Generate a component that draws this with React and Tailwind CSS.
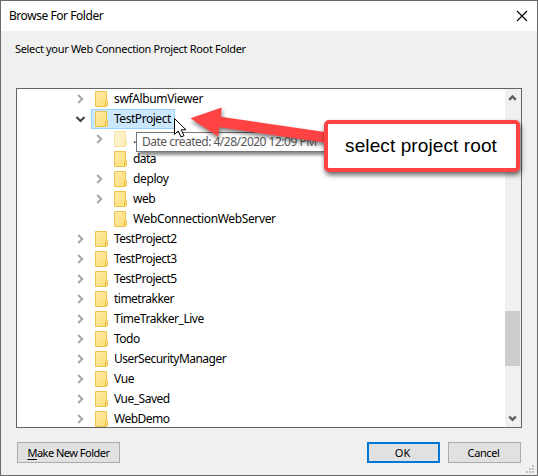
const ROWS = [
  { name: 'swfAlbumViewer', tracking: 'tracking-[-0.36px]' },
  { name: 'TestProject', open: true, selected: true, tracking: 'tracking-[-0.46px]' },
  { name: '.', nested: true, faded: true, tracking: 'tracking-[0px]' },
  { name: 'data', nested: true, leaf: true, tracking: 'tracking-[-0.55px]' },
  { name: 'deploy', nested: true, tracking: 'tracking-[-0.38px]' },
  { name: 'web', nested: true, tracking: 'tracking-[-0.45px]' },
  { name: 'WebConnectionWebServer', nested: true, leaf: true, tracking: 'tracking-[-0.36px]' },
  { name: 'TestProject2', tracking: 'tracking-[-0.5px]' },
  { name: 'TestProject3', tracking: 'tracking-[-0.5px]' },
  { name: 'TestProject5', tracking: 'tracking-[-0.5px]' },
  { name: 'timetrakker', tracking: 'tracking-[-0.52px]' },
  { name: 'TimeTrakker_Live', tracking: 'tracking-[-0.48px]' },
  { name: 'Todo', tracking: 'tracking-[-0.5px]' },
  { name: 'UserSecurityManager', tracking: 'tracking-[-0.53px]' },
  { name: 'Vue', tracking: 'tracking-[-0.4px]' },
  { name: 'Vue_Saved', tracking: 'tracking-[-0.5px]' },
  { name: 'WebDemo', tracking: 'tracking-[-0.5px]' },
];

function Chevron({ open }) {
  return (
    <svg className="h-5 w-3 shrink-0" viewBox="0 0 12 20" fill="none">
      {open ? (
        <path d="M1.5 8L5.5 12L9.5 8" stroke="#404040" strokeWidth="2" />
      ) : (
        <path d="M3.2 6L7.2 10L3.2 14" stroke="#a6a6a6" strokeWidth="2" />
      )}
    </svg>
  );
}

function Folder({ faded }) {
  return (
    <svg className={faded ? 'h-4 w-[13px] shrink-0 opacity-50' : 'h-4 w-[13px] shrink-0'} viewBox="0 0 13 16">
      <defs>
        <linearGradient id="folderFill" x1="0" y1="0" x2="1" y2="1">
          <stop offset="0" stopColor="#ffeba6" />
          <stop offset="1" stopColor="#fddd77" />
        </linearGradient>
      </defs>
      <path d="M0.5 0.5H11.5V9.5H12.5V14.5L11.5 15.5H0.5Z" fill="url(#folderFill)" stroke="#ebc54b" />
      <path d="M10.5 15V10.5L11.5 9.5" fill="none" stroke="#e8bd3c" />
    </svg>
  );
}

function TreeRow({ row }) {
  return (
    <div className={row.nested ? 'flex h-5 shrink-0 items-center pl-[77px]' : 'flex h-5 shrink-0 items-center pl-[58px]'}>
      <div className="w-4 shrink-0">{!row.leaf && <Chevron open={row.open} />}</div>
      <div
        className={
          row.selected
            ? 'flex h-5 w-[84px] items-center border border-[#99d1ff] bg-[#cce8ff] pl-[3px]'
            : 'flex h-5 items-center pl-1'
        }
      >
        <Folder faded={row.faded} />
        <span className={`ml-1.5 whitespace-pre ${row.tracking}`}>{row.name}</span>
      </div>
    </div>
  );
}

function ScrollArrow({ down }) {
  return (
    <svg className="h-[17px] w-[15px]" viewBox="0 0 15 17" fill="none">
      <path d={down ? 'M4.2 6.5L7.5 9.8L10.8 6.5' : 'M4.2 10.8L7.5 7.5L10.8 10.8'} stroke="#5c5c5c" strokeWidth="2.4" />
    </svg>
  );
}

export default function App() {
  return (
    <div className="relative flex h-[476px] w-[538px] flex-col overflow-hidden border border-[#6b6969] bg-[#f0f0f0] font-['Noto_Sans','Open_Sans',sans-serif] text-[12px] leading-5 text-black">
      <header className="flex h-[30px] shrink-0 items-center justify-between bg-white pr-[9px] pl-2">
        <span className="tracking-[-0.45px]">Browse For Folder</span>
        <svg className="h-3 w-3" viewBox="0 0 12 12" fill="none">
          <path d="M1 1L11 11M11 1L1 11" stroke="#000" strokeWidth="1.1" />
        </svg>
      </header>

      <p className="mt-2 h-12 shrink-0 pl-[14px] text-[11px] leading-5 whitespace-nowrap tracking-[-0.33px]">
        Select your Web Connection Project Root Folder
      </p>

      <main className="mt-px ml-[15px] flex h-[340px] w-[506px] shrink-0 border border-[#646464] bg-white">
        <div className="flex min-w-0 flex-1 flex-col overflow-hidden">
          {ROWS.map((row) => (
            <TreeRow key={row.name} row={row} />
          ))}
        </div>
        <div className="flex w-4 flex-col bg-[#f0f0f0] pr-px">
          <ScrollArrow />
          <div className="mt-[205px] h-[55px] bg-[#cdcdcd]" />
          <div className="mt-auto h-[17px]">
            <ScrollArrow down />
          </div>
        </div>
      </main>

      <footer className="mt-[14px] flex h-[21px] shrink-0 pr-4 pl-4 text-[11px]">
        <button className="flex h-[21px] w-[103px] items-center justify-center border border-[#adadad] bg-[#e1e1e1] whitespace-nowrap tracking-[-0.5px]">
          <span className="underline underline-offset-2">M</span>ake New Folder
        </button>
        <button className="ml-auto flex h-[21px] w-[73px] items-center justify-center border-2 border-[#0078d7] bg-[#e1e1e1] pr-0.5">
          OK
        </button>
        <button className="ml-2 flex h-[21px] w-[73px] items-center justify-center border border-[#adadad] bg-[#e1e1e1] pr-0.5 tracking-[-0.4px]">
          Cancel
        </button>
      </footer>

      <svg className="absolute right-[3px] bottom-[2px] h-2 w-2" viewBox="0 0 8 8" fill="#bfbfbf">
        <path d="M6 0h2v2h-2zM3 3h2v2h-2zM6 3h2v2h-2zM0 6h2v2h-2zM3 6h2v2h-2zM6 6h2v2h-2z" />
      </svg>

      <div className="absolute top-[131px] left-[135px] flex h-5 w-[200px] items-center border border-[#767676] bg-white pl-[5px] whitespace-nowrap text-[#575757] shadow-[3px_3px_3px_rgba(0,0,0,0.45)]">
        <span className="tracking-[-0.5px]">Date created: 4/28/2020 12:09 PM</span>
      </div>

      <svg className="absolute top-[-1px] left-[-1px] h-[200px] w-[360px]" viewBox="0 0 360 200">
        <path
          className="drop-shadow-[1px_3px_2px_rgba(0,0,0,0.5)]"
          d="M190.5 118.2L221.8 107.5L220.7 116.8L335 133.6V144L219.3 127.3L218 136.5Z"
          fill="#ff4343"
        />
        <path d="M174.5 118.5V134.5L178.3 131L181 137L184 135.7L181.3 129.8H186Z" fill="#fff" stroke="#000" />
      </svg>

      <div className="absolute top-[119px] left-[323px] flex h-[52px] w-[196px] items-center justify-center rounded-[5px] border-4 border-[#ff4343] bg-white pr-0.5 font-['Liberation_Sans',Arial,sans-serif] text-[19px] leading-6 whitespace-nowrap shadow-[1px_3px_5px_rgba(0,0,0,0.6)]">
        <span className="tracking-[0.1px]">select project root</span>
      </div>
    </div>
  );
}
